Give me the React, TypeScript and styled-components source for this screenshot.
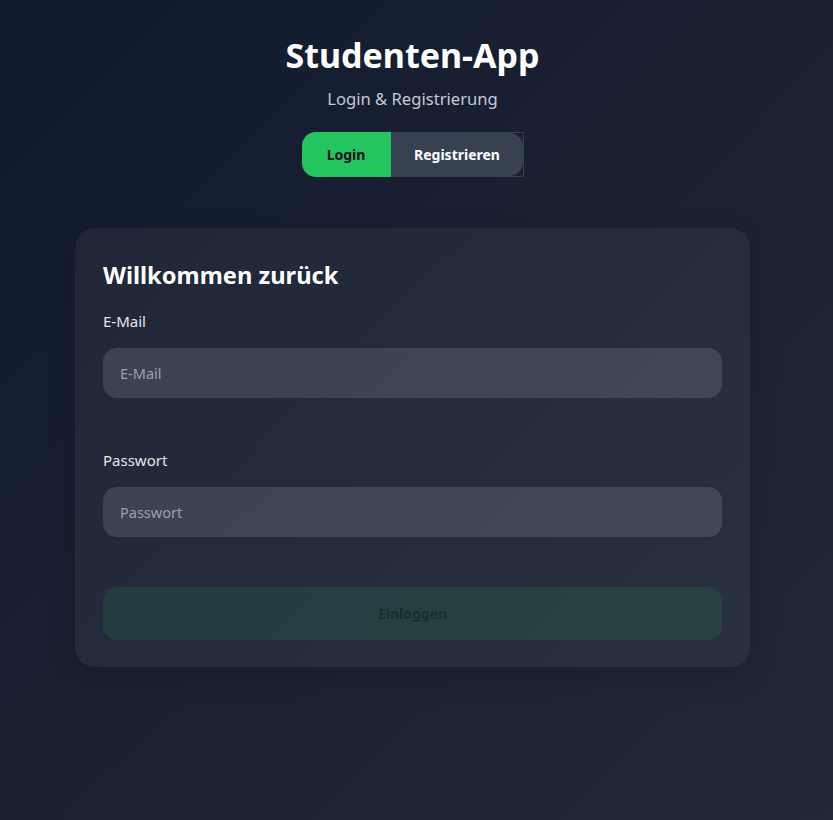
import React, { useState } from "react";
import styled, { createGlobalStyle } from "styled-components";

const Global = createGlobalStyle`
  html, body { margin: 0; padding: 0; }
  body {
    min-height: 820px;
    background: linear-gradient(135deg, #111a2e 0%, #1a2133 50%, #212838 100%);
    font-family: "Noto Sans", "Open Sans", sans-serif;
    color: #fff;
  }
  * { box-sizing: border-box; }
`;

const Page = styled.div`
  display: flex;
  flex-direction: column;
  align-items: center;
  padding: 33px 8px 0 0;
  min-height: 820px;
`;

const Title = styled.h1`
  margin: 0;
  font-size: 34px;
  font-weight: 700;
  line-height: 44px;
  color: #ffffff;
`;

const Subtitle = styled.p`
  margin: 11px 0 0;
  font-size: 16.6px;
  line-height: 22px;
  color: #c3cad6;
`;

const Toggle = styled.div`
  display: flex;
  margin-top: 22px;
  height: 45px;
`;

const TabButton = styled.button<{ $active?: boolean }>`
  border: none;
  padding: 0;
  font-family: inherit;
  font-size: 14px;
  font-weight: 700;
  cursor: pointer;
  height: 45px;
  ${(p) =>
    p.$active
      ? `
    width: 89px;
    background: #22c55e;
    color: #0b1220;
    border-radius: 14px 0 0 14px;
  `
      : `
    width: 133px;
    background: transparent;
    color: #ffffff;
    border: 1px solid rgba(255,255,255,0.14);
    display: flex;
    align-items: stretch;
  `}
`;

const TabFill = styled.span`
  flex: 1;
  display: flex;
  align-items: center;
  justify-content: center;
  background: #374151;
  border-radius: 0 14px 14px 0;
`;

const Card = styled.div`
  margin-top: 51px;
  width: 675px;
  padding: 30px 28px 27px;
  border-radius: 20px;
  background: rgba(255, 255, 255, 0.048);
  box-shadow: 0 10px 30px rgba(0, 0, 0, 0.15);
`;

const CardTitle = styled.h2`
  margin: 0;
  font-size: 23.7px;
  font-weight: 700;
  line-height: 34px;
  color: #ffffff;
`;

const Field = styled.div<{ $first?: boolean }>`
  display: flex;
  flex-direction: column;
  margin-top: ${(p) => (p.$first ? "19px" : "52px")};
`;

const Label = styled.label`
  font-size: 15px;
  line-height: 20px;
  color: #e5e7eb;
`;

const Input = styled.input`
  margin-top: 17px;
  height: 50px;
  width: 100%;
  border: none;
  outline: none;
  border-radius: 14px;
  background: rgba(255, 255, 255, 0.12);
  padding: 0 17px;
  font-family: inherit;
  font-size: 14.5px;
  color: #fff;
  &::placeholder {
    color: #9aa1ad;
  }
`;

const Submit = styled.button`
  margin-top: 50px;
  width: 100%;
  height: 53px;
  border: none;
  border-radius: 14px;
  background: rgba(34, 197, 94, 0.13);
  color: #17302a;
  font-family: inherit;
  font-size: 14px;
  font-weight: 700;
  cursor: not-allowed;
`;

export default function App() {
  const [mode, setMode] = useState<"login" | "register">("login");
  return (
    <>
      <Global />
      <Page>
        <Title>Studenten-App</Title>
        <Subtitle>Login &amp; Registrierung</Subtitle>
        <Toggle>
          <TabButton $active onClick={() => setMode("login")}>
            Login
          </TabButton>
          <TabButton onClick={() => setMode("register")}>
            <TabFill>Registrieren</TabFill>
          </TabButton>
        </Toggle>
        <Card data-mode={mode}>
          <CardTitle>Willkommen zurück</CardTitle>
          <Field $first>
            <Label htmlFor="email">E-Mail</Label>
            <Input id="email" type="email" placeholder="E-Mail" />
          </Field>
          <Field>
            <Label htmlFor="pw">Passwort</Label>
            <Input id="pw" type="password" placeholder="Passwort" />
          </Field>
          <Submit disabled>Einloggen</Submit>
        </Card>
      </Page>
    </>
  );
}
